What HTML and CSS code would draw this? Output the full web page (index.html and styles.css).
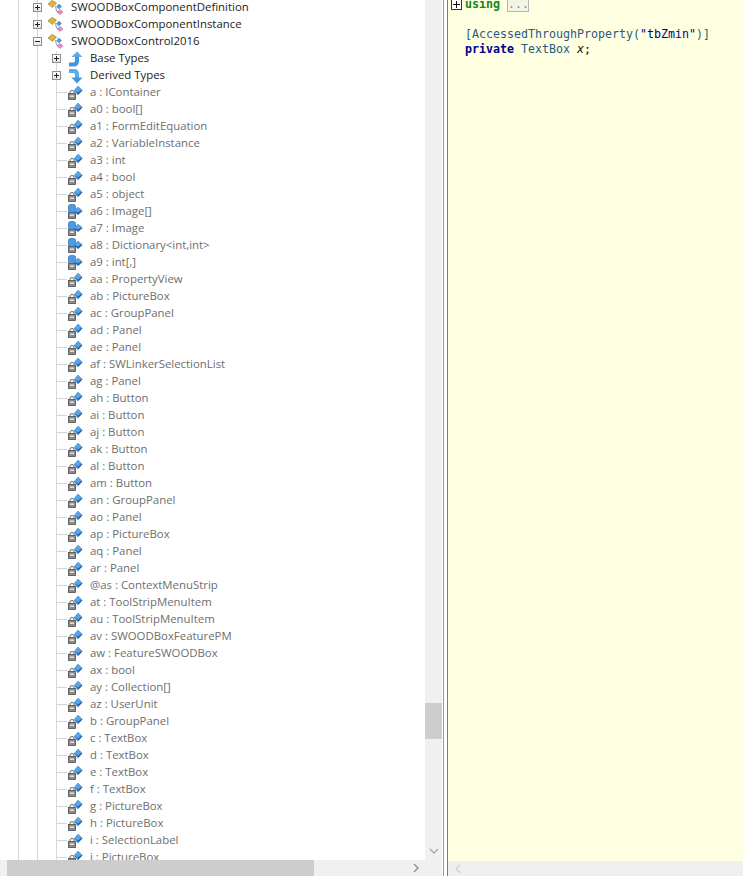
FILE: index.html
```html
<!DOCTYPE html>
<html lang="en">
<head>
<meta charset="utf-8">
<title>Assembly browser</title>
<link rel="stylesheet" href="styles.css">
</head>
<body>
<svg class="defs" width="0" height="0" aria-hidden="true">
  <defs>
    <g id="i-class">
      <path d="M1 4 L5 0.500 L9.500 3 L5.500 7.500 Z" fill="#dcb63e" stroke="#9c7f28" stroke-width=".7"/>
      <path d="M9.500 6.500 L12 4 L14.500 6.500 L12 9 Z" fill="#4aa0dc" stroke="#2f7db5" stroke-width=".5"/>
      <path d="M10 12 L13 9.500 L16 12 L13 14.500 Z" fill="#e88ccb" stroke="#b8609a" stroke-width=".5"/>
      <path d="M8.500 6 L9.500 11 L11 11.500" fill="none" stroke="#66808c" stroke-width=".8"/>
    </g>
    <g id="i-up">
      <path d="M3 13.500 L8 13.500 Q11 13.500 11 9.500 L11 5" fill="none" stroke="#3a97e0" stroke-width="4"/>
      <path d="M5.500 6 L11 0.500 L16.500 6 Z" fill="#55aeea"/>
    </g>
    <g id="i-down">
      <path d="M3 3 L8 3 Q11 3 11 6.500 L11 10" fill="none" stroke="#55aeea" stroke-width="4"/>
      <path d="M5.500 9.500 L11 15.500 L16.500 9.500 Z" fill="#3a97e0"/>
    </g>
    <g id="i-lock">
      <path d="M3 9 L3 7 Q3 5.500 5 5.500 Q7 5.500 7 7 L7 9" fill="none" stroke="#6a6a6a" stroke-width="1"/>
      <rect x="1.500" y="8.500" width="7" height="6" fill="#8a8a8a" stroke="#4e4e4e" stroke-width=".8"/>
      <rect x="3" y="10.500" width="4" height="1.400" fill="#e8e8e8"/>
    </g>
    <g id="i-cube">
      <path d="M7 5.500 L11 1 L15.500 5.500 L11 10 Z" fill="#1a5fa8"/>
      <path d="M7 5.500 L11 1 L15 4.500 L11 7.500 Z" fill="#5aa4e6"/>
      <path d="M7 5.500 L11 7.500 L11 10 Z" fill="#3f84cc"/>
    </g>
    <g id="i-field">
      <use href="#i-lock"/>
      <use href="#i-cube"/>
    </g>
    <g id="i-event">
      <use href="#i-lock"/>
      <rect x="1.500" y="0.500" width="7" height="8" rx="2" fill="#4f9ae0" stroke="#2b6aa8" stroke-width=".7"/>
      <path d="M7 7 L11 3 L15.500 7 L11 11 Z" fill="#1a5fa8"/>
      <path d="M7 7 L11 3 L15 6 L11 8.500 Z" fill="#5aa4e6"/>
    </g>
  </defs>
</svg>

<div class="app">
  <section class="left">
    <div class="left-main">
      <div class="tree">
        <div class="row l1"><span class="exp plus"></span><svg class="icon" viewBox="0 0 16 16"><use href="#i-class"/></svg><span class="label dark">SWOODBoxComponentDefinition</span></div>
        <div class="row l1"><span class="exp plus"></span><svg class="icon" viewBox="0 0 16 16"><use href="#i-class"/></svg><span class="label dark">SWOODBoxComponentInstance</span></div>
        <div class="row l1"><span class="exp minus"></span><svg class="icon" viewBox="0 0 16 16"><use href="#i-class"/></svg><span class="label dark">SWOODBoxControl2016</span></div>
        <div class="children">
          <div class="row l2"><span class="exp plus"></span><svg class="icon" viewBox="0 0 16 16"><use href="#i-up"/></svg><span class="label dark">Base Types</span></div>
          <div class="row l2"><span class="exp plus"></span><svg class="icon" viewBox="0 0 16 16"><use href="#i-down"/></svg><span class="label dark">Derived Types</span></div>
          <div class="row leaf"><span class="conn"></span><svg class="icon" viewBox="0 0 16 16"><use href="#i-field"/></svg><span class="label">a : IContainer</span></div>
          <div class="row leaf"><span class="conn"></span><svg class="icon" viewBox="0 0 16 16"><use href="#i-field"/></svg><span class="label">a0 : bool[]</span></div>
          <div class="row leaf"><span class="conn"></span><svg class="icon" viewBox="0 0 16 16"><use href="#i-field"/></svg><span class="label">a1 : FormEditEquation</span></div>
          <div class="row leaf"><span class="conn"></span><svg class="icon" viewBox="0 0 16 16"><use href="#i-field"/></svg><span class="label">a2 : VariableInstance</span></div>
          <div class="row leaf"><span class="conn"></span><svg class="icon" viewBox="0 0 16 16"><use href="#i-field"/></svg><span class="label">a3 : int</span></div>
          <div class="row leaf"><span class="conn"></span><svg class="icon" viewBox="0 0 16 16"><use href="#i-field"/></svg><span class="label">a4 : bool</span></div>
          <div class="row leaf"><span class="conn"></span><svg class="icon" viewBox="0 0 16 16"><use href="#i-field"/></svg><span class="label">a5 : object</span></div>
          <div class="row leaf"><span class="conn"></span><svg class="icon" viewBox="0 0 16 16"><use href="#i-event"/></svg><span class="label">a6 : Image[]</span></div>
          <div class="row leaf"><span class="conn"></span><svg class="icon" viewBox="0 0 16 16"><use href="#i-event"/></svg><span class="label">a7 : Image</span></div>
          <div class="row leaf"><span class="conn"></span><svg class="icon" viewBox="0 0 16 16"><use href="#i-event"/></svg><span class="label">a8 : Dictionary&lt;int,int&gt;</span></div>
          <div class="row leaf"><span class="conn"></span><svg class="icon" viewBox="0 0 16 16"><use href="#i-event"/></svg><span class="label">a9 : int[,]</span></div>
          <div class="row leaf"><span class="conn"></span><svg class="icon" viewBox="0 0 16 16"><use href="#i-field"/></svg><span class="label">aa : PropertyView</span></div>
          <div class="row leaf"><span class="conn"></span><svg class="icon" viewBox="0 0 16 16"><use href="#i-field"/></svg><span class="label">ab : PictureBox</span></div>
          <div class="row leaf"><span class="conn"></span><svg class="icon" viewBox="0 0 16 16"><use href="#i-field"/></svg><span class="label">ac : GroupPanel</span></div>
          <div class="row leaf"><span class="conn"></span><svg class="icon" viewBox="0 0 16 16"><use href="#i-field"/></svg><span class="label">ad : Panel</span></div>
          <div class="row leaf"><span class="conn"></span><svg class="icon" viewBox="0 0 16 16"><use href="#i-field"/></svg><span class="label">ae : Panel</span></div>
          <div class="row leaf"><span class="conn"></span><svg class="icon" viewBox="0 0 16 16"><use href="#i-field"/></svg><span class="label">af : SWLinkerSelectionList</span></div>
          <div class="row leaf"><span class="conn"></span><svg class="icon" viewBox="0 0 16 16"><use href="#i-field"/></svg><span class="label">ag : Panel</span></div>
          <div class="row leaf"><span class="conn"></span><svg class="icon" viewBox="0 0 16 16"><use href="#i-field"/></svg><span class="label">ah : Button</span></div>
          <div class="row leaf"><span class="conn"></span><svg class="icon" viewBox="0 0 16 16"><use href="#i-field"/></svg><span class="label">ai : Button</span></div>
          <div class="row leaf"><span class="conn"></span><svg class="icon" viewBox="0 0 16 16"><use href="#i-field"/></svg><span class="label">aj : Button</span></div>
          <div class="row leaf"><span class="conn"></span><svg class="icon" viewBox="0 0 16 16"><use href="#i-field"/></svg><span class="label">ak : Button</span></div>
          <div class="row leaf"><span class="conn"></span><svg class="icon" viewBox="0 0 16 16"><use href="#i-field"/></svg><span class="label">al : Button</span></div>
          <div class="row leaf"><span class="conn"></span><svg class="icon" viewBox="0 0 16 16"><use href="#i-field"/></svg><span class="label">am : Button</span></div>
          <div class="row leaf"><span class="conn"></span><svg class="icon" viewBox="0 0 16 16"><use href="#i-field"/></svg><span class="label">an : GroupPanel</span></div>
          <div class="row leaf"><span class="conn"></span><svg class="icon" viewBox="0 0 16 16"><use href="#i-field"/></svg><span class="label">ao : Panel</span></div>
          <div class="row leaf"><span class="conn"></span><svg class="icon" viewBox="0 0 16 16"><use href="#i-field"/></svg><span class="label">ap : PictureBox</span></div>
          <div class="row leaf"><span class="conn"></span><svg class="icon" viewBox="0 0 16 16"><use href="#i-field"/></svg><span class="label">aq : Panel</span></div>
          <div class="row leaf"><span class="conn"></span><svg class="icon" viewBox="0 0 16 16"><use href="#i-field"/></svg><span class="label">ar : Panel</span></div>
          <div class="row leaf"><span class="conn"></span><svg class="icon" viewBox="0 0 16 16"><use href="#i-field"/></svg><span class="label">@as : ContextMenuStrip</span></div>
          <div class="row leaf"><span class="conn"></span><svg class="icon" viewBox="0 0 16 16"><use href="#i-field"/></svg><span class="label">at : ToolStripMenuItem</span></div>
          <div class="row leaf"><span class="conn"></span><svg class="icon" viewBox="0 0 16 16"><use href="#i-field"/></svg><span class="label">au : ToolStripMenuItem</span></div>
          <div class="row leaf"><span class="conn"></span><svg class="icon" viewBox="0 0 16 16"><use href="#i-field"/></svg><span class="label">av : SWOODBoxFeaturePM</span></div>
          <div class="row leaf"><span class="conn"></span><svg class="icon" viewBox="0 0 16 16"><use href="#i-field"/></svg><span class="label">aw : FeatureSWOODBox</span></div>
          <div class="row leaf"><span class="conn"></span><svg class="icon" viewBox="0 0 16 16"><use href="#i-field"/></svg><span class="label">ax : bool</span></div>
          <div class="row leaf"><span class="conn"></span><svg class="icon" viewBox="0 0 16 16"><use href="#i-field"/></svg><span class="label">ay : Collection[]</span></div>
          <div class="row leaf"><span class="conn"></span><svg class="icon" viewBox="0 0 16 16"><use href="#i-field"/></svg><span class="label">az : UserUnit</span></div>
          <div class="row leaf"><span class="conn"></span><svg class="icon" viewBox="0 0 16 16"><use href="#i-field"/></svg><span class="label">b : GroupPanel</span></div>
          <div class="row leaf"><span class="conn"></span><svg class="icon" viewBox="0 0 16 16"><use href="#i-field"/></svg><span class="label">c : TextBox</span></div>
          <div class="row leaf"><span class="conn"></span><svg class="icon" viewBox="0 0 16 16"><use href="#i-field"/></svg><span class="label">d : TextBox</span></div>
          <div class="row leaf"><span class="conn"></span><svg class="icon" viewBox="0 0 16 16"><use href="#i-field"/></svg><span class="label">e : TextBox</span></div>
          <div class="row leaf"><span class="conn"></span><svg class="icon" viewBox="0 0 16 16"><use href="#i-field"/></svg><span class="label">f : TextBox</span></div>
          <div class="row leaf"><span class="conn"></span><svg class="icon" viewBox="0 0 16 16"><use href="#i-field"/></svg><span class="label">g : PictureBox</span></div>
          <div class="row leaf"><span class="conn"></span><svg class="icon" viewBox="0 0 16 16"><use href="#i-field"/></svg><span class="label">h : PictureBox</span></div>
          <div class="row leaf"><span class="conn"></span><svg class="icon" viewBox="0 0 16 16"><use href="#i-field"/></svg><span class="label">i : SelectionLabel</span></div>
          <div class="row leaf"><span class="conn"></span><svg class="icon" viewBox="0 0 16 16"><use href="#i-field"/></svg><span class="label">j : PictureBox</span></div>
        </div>
      </div>
      <div class="vscroll">
        <div class="vthumb"></div>
        <svg class="chev-down" width="10" height="6" viewBox="0 0 10 6"><path d="M1 1 L5 5 L9 1" fill="none" stroke="#a6a6a6" stroke-width="1.300"/></svg>
      </div>
    </div>
    <div class="hscroll">
      <div class="hthumb"></div>
      <svg class="chev-right" width="6" height="10" viewBox="0 0 6 10"><path d="M1 1 L5 5 L1 9" fill="none" stroke="#8a8a8a" stroke-width="1.300"/></svg>
    </div>
  </section>

  <div class="splitter"></div>

  <section class="right">
    <div class="code">
      <div class="line top"><span class="code-exp"></span><span class="kw-green">using</span><span class="fold">...</span></div>
      <div class="line"></div>
      <div class="line indent"><span class="attr">[AccessedThroughProperty(</span><span class="str">"tbZmin"</span><span class="attr">)]</span></div>
      <div class="line indent"><span><span class="kw">private</span> <span class="type">TextBox</span> <span class="var">x</span>;</span></div>
    </div>
    <div class="rscroll">
      <svg width="6" height="10" viewBox="0 0 6 10"><path d="M5 1 L1 5 L5 9" fill="none" stroke="#cfcfcf" stroke-width="1.300"/></svg>
    </div>
  </section>
</div>
</body>
</html>
```

FILE: styles.css
```css
* { box-sizing: border-box; }
html, body { margin: 0; padding: 0; height: 100%; overflow: hidden; background: #fff; }
.defs { display: block; height: 0; }

.app { display: flex; width: 743px; height: 876px; overflow: hidden; }

.left { width: 443px; flex: none; display: flex; flex-direction: column; padding-right: 1px; }
.left-main { flex: 1; display: flex; min-height: 0; }

.tree {
  flex: 1;
  min-width: 0;
  overflow: hidden;
  font: 11.400px/17px "Open Sans", "Noto Sans", sans-serif;
  background:
    linear-gradient(#d4d4d4, #d4d4d4) 18px 0 / 1px 100% no-repeat,
    linear-gradient(#d4d4d4, #d4d4d4) 37px 0 / 1px 100% no-repeat,
    #fff;
}
.children {
  background: linear-gradient(#d8d8d8, #d8d8d8) 56px 0 / 1px 100% no-repeat;
}

.row { height: 17px; display: flex; align-items: center; white-space: nowrap; position: relative; top: -1px; }
.l1 { padding-left: 33px; }
.l2 { padding-left: 52px; }
.leaf { padding-left: 57px; }

.l1 .icon { margin-left: 5px; margin-right: 8px; }
.l2 .icon { margin-left: 5px; margin-right: 8px; }

.exp {
  width: 9px; height: 9px; flex: none;
  border: 1px solid #8f8f8f;
  background: linear-gradient(#fff, #e4e4e4);
  position: relative;
}
.exp::before {
  content: ""; position: absolute; left: 1px; top: 3px; width: 5px; height: 1px; background: #222;
}
.plus::after {
  content: ""; position: absolute; left: 3px; top: 1px; width: 1px; height: 5px; background: #222;
}

.conn { width: 10px; height: 1px; background: #d4d4d4; flex: none; }
.icon { width: 16px; height: 16px; flex: none; overflow: visible; }
.leaf .icon { margin-right: 7px; }

.label { color: #6e6e6e; margin-bottom: 2px; }
.label.dark { color: #1c1c1c; }

.vscroll {
  width: 17px; flex: none; background: #f0f0f0;
  display: flex; flex-direction: column; align-items: center;
}
.vthumb { width: 100%; height: 36px; margin-top: 703px; background: #cdcdcd; }
.chev-down { margin-top: auto; margin-bottom: 6px; }

.hscroll {
  height: 16px; flex: none; background: #f0f0f0;
  display: flex; align-items: center; padding-left: 7px;
}
.hthumb { width: 307px; height: 100%; background: #cdcdcd; }
.chev-right { margin-left: 99px; }

.splitter {
  width: 5px; flex: none; background: #fff;
  border-left: 1px solid #9a9a9a;
  border-right: 1px solid #7c7c7c;
}

.right { flex: 1; min-width: 0; display: flex; flex-direction: column; background: #ffffe1; }
.code {
  flex: 1; min-height: 0; overflow: hidden;
  padding-left: 3px;
  font: 11.630px/15px "DejaVu Sans Mono", "Liberation Mono", monospace;
  color: #111;
}
.line { height: 15px; white-space: pre; display: flex; align-items: center; }
.line.top { margin-top: -3px; }
.indent { padding-left: 14px; }
.code-exp {
  width: 11px; height: 11px; flex: none; margin-right: 3px;
  border: 1px solid #333; background: #fff; position: relative;
}
.code-exp::before { content: ""; position: absolute; left: 1px; top: 4px; width: 7px; height: 1px; background: #111; }
.code-exp::after { content: ""; position: absolute; left: 4px; top: 1px; width: 1px; height: 7px; background: #111; }
.kw-green { color: #0a8a1e; font-weight: bold; }
.fold {
  margin-left: 7px; width: 22px; height: 15px; line-height: 13px; color: #888; text-align: center;
  border: 1px solid #b5b5b5; background: #f4f4e4;
}
.kw { color: #00008b; font-weight: bold; }
.attr, .type { color: #2b5a80; }
.str { color: #00008b; }
.var { font-style: italic; }

.rscroll {
  height: 15px; flex: none; background: #efefef;
  display: flex; align-items: center; padding-left: 7px;
}
```
